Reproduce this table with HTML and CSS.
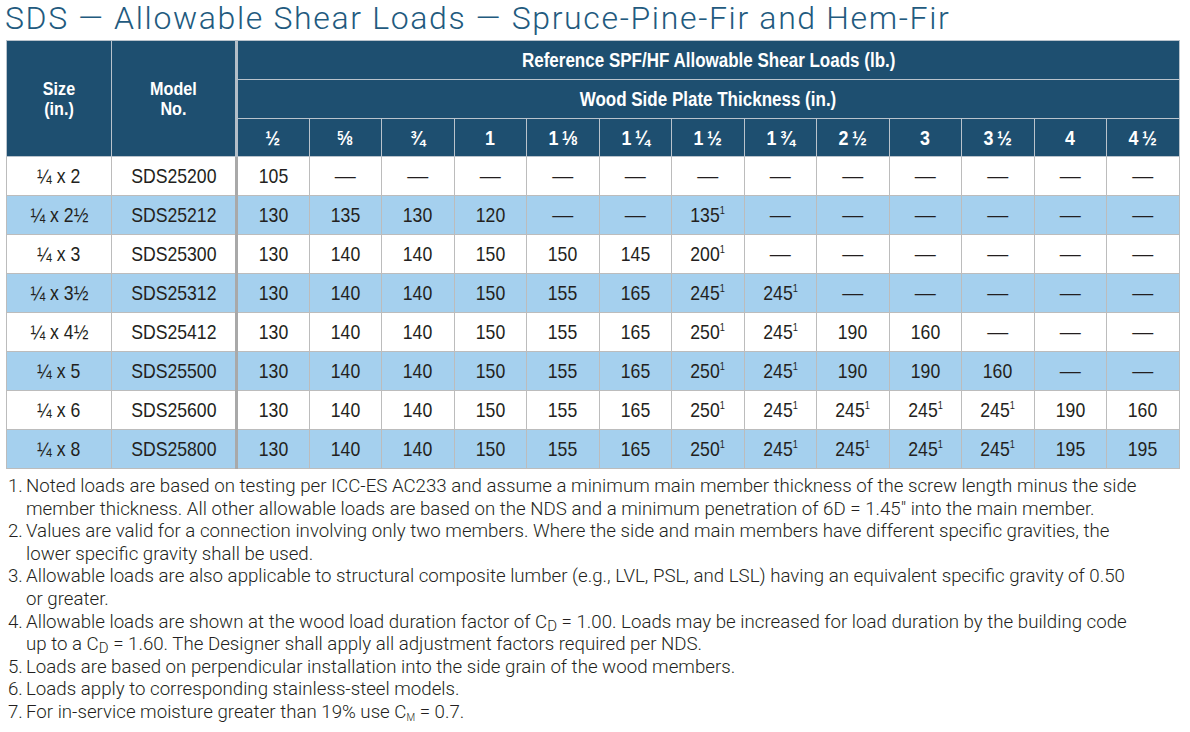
FILE: index.html
```html
<!DOCTYPE html>
<html>
<head>
<meta charset="utf-8">
<link rel="stylesheet" href="styles.css">
</head>
<body>
<h1 class="title">SDS — Allowable Shear Loads — Spruce-Pine-Fir and Hem-Fir</h1>
<table class="loads">
  <colgroup>
    <col class="c-size"><col class="c-model">
    <col class="c-num"><col class="c-num"><col class="c-num"><col class="c-num"><col class="c-num"><col class="c-num"><col class="c-num"><col class="c-num"><col class="c-num"><col class="c-num"><col class="c-num"><col class="c-num"><col class="c-num">
  </colgroup>
  <thead>
    <tr class="h1">
      <th rowspan="3" class="hs"><span class="x"><span class="ln">Size</span><span class="ln">(in.)</span></span></th>
      <th rowspan="3" class="hs"><span class="x"><span class="ln">Model</span><span class="ln">No.</span></span></th>
      <th colspan="13" class="sep"><span class="x">Reference SPF/HF Allowable Shear Loads (lb.)</span></th>
    </tr>
    <tr class="h2">
      <th colspan="13" class="sep"><span class="x">Wood Side Plate Thickness (in.)</span></th>
    </tr>
    <tr class="h3">
      <th class="sep"><span class="x">½</span></th>
      <th><span class="x"><span class="fr"><span class="nu">5</span>⁄<span class="de">8</span></span></span></th>
      <th><span class="x">¾</span></th>
      <th><span class="x">1</span></th>
      <th><span class="x">1&#8201;<span class="fr"><span class="nu">1</span>⁄<span class="de">8</span></span></span></th>
      <th><span class="x">1&#8201;¼</span></th>
      <th><span class="x">1&#8201;½</span></th>
      <th><span class="x">1&#8201;¾</span></th>
      <th><span class="x">2&#8201;½</span></th>
      <th><span class="x">3</span></th>
      <th><span class="x">3&#8201;½</span></th>
      <th><span class="x">4</span></th>
      <th><span class="x">4&#8201;½</span></th>
    </tr>
  </thead>
  <tbody>
    <tr><td><span class="x">¼ x 2</span></td><td><span class="x">SDS25200</span></td><td class="sep"><span class="x">105</span></td><td>—</td><td>—</td><td>—</td><td>—</td><td>—</td><td>—</td><td>—</td><td>—</td><td>—</td><td>—</td><td>—</td><td>—</td></tr>
    <tr class="alt"><td><span class="x">¼ x 2½</span></td><td><span class="x">SDS25212</span></td><td class="sep"><span class="x">130</span></td><td><span class="x">135</span></td><td><span class="x">130</span></td><td><span class="x">120</span></td><td>—</td><td>—</td><td><span class="x">135<sup>1</sup></span></td><td>—</td><td>—</td><td>—</td><td>—</td><td>—</td><td>—</td></tr>
    <tr><td><span class="x">¼ x 3</span></td><td><span class="x">SDS25300</span></td><td class="sep"><span class="x">130</span></td><td><span class="x">140</span></td><td><span class="x">140</span></td><td><span class="x">150</span></td><td><span class="x">150</span></td><td><span class="x">145</span></td><td><span class="x">200<sup>1</sup></span></td><td>—</td><td>—</td><td>—</td><td>—</td><td>—</td><td>—</td></tr>
    <tr class="alt"><td><span class="x">¼ x 3½</span></td><td><span class="x">SDS25312</span></td><td class="sep"><span class="x">130</span></td><td><span class="x">140</span></td><td><span class="x">140</span></td><td><span class="x">150</span></td><td><span class="x">155</span></td><td><span class="x">165</span></td><td><span class="x">245<sup>1</sup></span></td><td><span class="x">245<sup>1</sup></span></td><td>—</td><td>—</td><td>—</td><td>—</td><td>—</td></tr>
    <tr><td><span class="x">¼ x 4½</span></td><td><span class="x">SDS25412</span></td><td class="sep"><span class="x">130</span></td><td><span class="x">140</span></td><td><span class="x">140</span></td><td><span class="x">150</span></td><td><span class="x">155</span></td><td><span class="x">165</span></td><td><span class="x">250<sup>1</sup></span></td><td><span class="x">245<sup>1</sup></span></td><td><span class="x">190</span></td><td><span class="x">160</span></td><td>—</td><td>—</td><td>—</td></tr>
    <tr class="alt"><td><span class="x">¼ x 5</span></td><td><span class="x">SDS25500</span></td><td class="sep"><span class="x">130</span></td><td><span class="x">140</span></td><td><span class="x">140</span></td><td><span class="x">150</span></td><td><span class="x">155</span></td><td><span class="x">165</span></td><td><span class="x">250<sup>1</sup></span></td><td><span class="x">245<sup>1</sup></span></td><td><span class="x">190</span></td><td><span class="x">190</span></td><td><span class="x">160</span></td><td>—</td><td>—</td></tr>
    <tr><td><span class="x">¼ x 6</span></td><td><span class="x">SDS25600</span></td><td class="sep"><span class="x">130</span></td><td><span class="x">140</span></td><td><span class="x">140</span></td><td><span class="x">150</span></td><td><span class="x">155</span></td><td><span class="x">165</span></td><td><span class="x">250<sup>1</sup></span></td><td><span class="x">245<sup>1</sup></span></td><td><span class="x">245<sup>1</sup></span></td><td><span class="x">245<sup>1</sup></span></td><td><span class="x">245<sup>1</sup></span></td><td><span class="x">190</span></td><td><span class="x">160</span></td></tr>
    <tr class="alt"><td><span class="x">¼ x 8</span></td><td><span class="x">SDS25800</span></td><td class="sep"><span class="x">130</span></td><td><span class="x">140</span></td><td><span class="x">140</span></td><td><span class="x">150</span></td><td><span class="x">155</span></td><td><span class="x">165</span></td><td><span class="x">250<sup>1</sup></span></td><td><span class="x">245<sup>1</sup></span></td><td><span class="x">245<sup>1</sup></span></td><td><span class="x">245<sup>1</sup></span></td><td><span class="x">245<sup>1</sup></span></td><td><span class="x">195</span></td><td><span class="x">195</span></td></tr>
  </tbody>
</table>
<ol class="notes">
  <li><span class="num">1.</span><span class="txt">Noted loads are based on testing per ICC-ES AC233 and assume a minimum main member thickness of the screw length minus the side<br>member thickness. All other allowable loads are based on the NDS and a minimum penetration of 6D = 1.45" into the main member.</span></li>
  <li><span class="num">2.</span><span class="txt">Values are valid for a connection involving only two members. Where the side and main members have different specific gravities, the<br>lower specific gravity shall be used.</span></li>
  <li><span class="num">3.</span><span class="txt">Allowable loads are also applicable to structural composite lumber (e.g., LVL, PSL, and LSL) having an equivalent specific gravity of 0.50<br>or greater.</span></li>
  <li><span class="num">4.</span><span class="txt">Allowable loads are shown at the wood load duration factor of C<sub>D</sub> = 1.00. Loads may be increased for load duration by the building code<br>up to a C<sub>D</sub> = 1.60. The Designer shall apply all adjustment factors required per NDS.</span></li>
  <li><span class="num">5.</span><span class="txt">Loads are based on perpendicular installation into the side grain of the wood members.</span></li>
  <li><span class="num">6.</span><span class="txt">Loads apply to corresponding stainless-steel models.</span></li>
  <li><span class="num">7.</span><span class="txt">For in-service moisture greater than 19% use C<sub class="m">M</sub> = 0.7.</span></li>
</ol>
</body>
</html>
```
FILE: styles.css
```css
html, body {
  margin: 0;
  padding: 0;
  background: #ffffff;
}
body {
  padding: 0 0 0 6px;
  width: 1174px;
}
.title {
  margin: -1px 0 1px -1px;
  height: 40px;
  font-family: Roboto, "Liberation Sans", sans-serif;
  font-weight: 300;
  font-size: 32px;
  letter-spacing: 1.65px;
  line-height: 38px;
  color: #225a7e;
  white-space: nowrap;
}
.loads {
  border-collapse: collapse;
  table-layout: fixed;
  width: 1173px;
  font-family: "Liberation Sans", Arial, sans-serif;
}
.c-size { width: 105px; }
.c-model { width: 125px; }
.c-num { width: 72.5px; }
.x {
  display: inline-block;
  transform: scaleX(0.84);
  white-space: nowrap;
}
.loads th .x {
  transform: scaleX(0.85);
}
.loads th {
  background: #1e4f70;
  color: #ffffff;
  font-weight: bold;
  font-size: 20px;
  border: 1px solid #b9c3cc;
  padding: 0;
  text-align: center;
  vertical-align: middle;
}
.loads th.hs {
  font-size: 19px;
  line-height: 20px;
}
.loads th.hs .ln {
  display: block;
  height: 20px;
}
.loads .h1 th, .loads .h2 th { height: 38px; }
.loads .h3 th { height: 37px; font-size: 21px; }
.fr .nu {
  font-size: 0.62em;
  vertical-align: 0.42em;
  line-height: 0;
}
.fr .de {
  font-size: 0.62em;
  line-height: 0;
}
.loads td {
  height: 38px;
  padding: 0;
  border: 1px solid #bcbcbc;
  text-align: center;
  vertical-align: middle;
  font-size: 21px;
  color: #231f20;
}
.loads .sep { border-left: 3px solid #a9a9a9; }
.loads thead .sep { border-left-color: #b3bec8; }
.loads tr.alt td { background: #a5d0ee; }
.loads sup {
  font-size: 11px;
  vertical-align: 8px;
  line-height: 0;
}
.notes {
  list-style: none;
  margin: 6px 0 0 2px;
  padding: 0;
  font-family: Roboto, "Liberation Sans", sans-serif;
  font-weight: 300;
  font-size: 18.7px;
  line-height: 22.6px;
  color: #231f20;
}
.notes li {
  display: flex;
}
.notes .num {
  flex: 0 0 18px;
}
.notes .txt {
  flex: 1;
  white-space: nowrap;
}
.notes sub {
  font-size: 15px;
  vertical-align: -3px;
  line-height: 0;
}
.notes sub.m {
  font-size: 10px;
  vertical-align: -3px;
}
```
